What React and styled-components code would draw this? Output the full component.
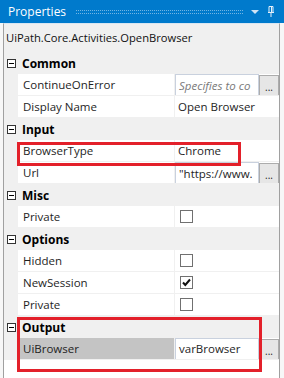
import React from 'react'
import styled, { createGlobalStyle } from 'styled-components'

const titleBlue = '#007acc'
const lineGray = '#a0a0a0'
const panelGray = '#f0f0f0'
const red = '#e3202a'

const GlobalStyle = createGlobalStyle`
  html, body {
    margin: 0;
    padding: 0;
    background: #fff;
  }
  body {
    font-family: "Open Sans", "Noto Sans", sans-serif;
    font-size: 11.5px;
    color: #1e1e1e;
  }
`

const Panel = styled.div`
  position: relative;
  width: 284px;
  height: 378px;
  overflow: hidden;
  background: #f7f7f7;
`

const TitleBar = styled.div`
  display: flex;
  align-items: center;
  height: 23px;
  padding: 0 0 0 8px;
  background: ${titleBlue};
  color: #fff;
  font-size: 12px;
`

const Grip = styled.div`
  flex: 1;
  height: 2px;
  margin: 1px 8px 0 10px;
  border-top: 1px dotted rgba(255, 255, 255, 0.45);
  border-bottom: 1px dotted rgba(255, 255, 255, 0.45);
`

const TitleIcons = styled.div`
  display: flex;
  align-items: center;
  gap: 8px;
  padding-right: 9px;
`

const Body = styled.div`
  margin: 0 4px 0 3px;
  height: 355px;
  border-left: 1px solid ${lineGray};
  border-right: 1px solid ${lineGray};
  border-top: 1px solid #d8e6f2;
  background: ${panelGray};
  display: flex;
  flex-direction: column;
`

const Subtitle = styled.div`
  height: 28px;
  line-height: 28px;
  padding-left: 2px;
  font-size: 11.2px;
  color: #111;
`

const Grid = styled.div`
  flex: 1;
  background: #fff;
  display: flex;
  flex-direction: column;
`

const Row = styled.div`
  display: grid;
  grid-template-columns: 14px 156px 1px 104px;
  height: 22px;
  box-sizing: border-box;
  background: ${panelGray};
  border-bottom: ${(p) => (p.$category ? 'none' : `1px solid ${panelGray}`)};
`

const Gutter = styled.div`
  display: flex;
  align-items: center;
  justify-content: center;
  padding-left: 1px;
`

const Minus = styled.div`
  position: relative;
  width: 7px;
  height: 7px;
  border: 1px solid #333;
  background: #fff;

  &::after {
    content: '';
    position: absolute;
    left: 1px;
    right: 1px;
    top: 3px;
    height: 1px;
    background: #000;
  }
`

const CategoryName = styled.div`
  grid-column: 2 / 5;
  display: flex;
  align-items: center;
  padding-left: 4px;
  font-weight: 700;
  font-size: 12px;
  color: #000;
`

const NameCell = styled.div`
  display: flex;
  align-items: center;
  padding-left: 5px;
  background: ${(p) => (p.$selected ? '#c4c4c4' : '#fff')};
  white-space: nowrap;
  overflow: hidden;
`

const Divider = styled.div`
  background: ${panelGray};
`

const ValueCell = styled.div`
  display: flex;
  align-items: center;
  background: #fff;
  padding-left: ${(p) => (p.$pad ? '3px' : '0')};
  white-space: nowrap;
  overflow: hidden;
`

const TextBox = styled.div`
  box-sizing: border-box;
  flex: 0 0 84px;
  min-width: 0;
  height: 22px;
  margin-top: ${(p) => (p.$shift ? '1px' : '0')};
  display: flex;
  align-items: center;
  padding-left: 3px;
  border: 1px solid #c9d1de;
  background: #fff;
  overflow: hidden;
  white-space: nowrap;
  color: ${(p) => (p.$placeholder ? '#7a7a7a' : '#1e1e1e')};
  font-style: ${(p) => (p.$placeholder ? 'italic' : 'normal')};
`

const DotsButton = styled.div`
  box-sizing: border-box;
  flex: 0 0 20px;
  height: 21px;
  margin-top: 1px;
  border: 1px solid #acacac;
  background: #e6e6e6;
  display: flex;
  align-items: flex-end;
  justify-content: center;
  padding-bottom: 4px;
  font-size: 10px;
  line-height: 8px;
  color: #222;
`

const Check = styled.div`
  box-sizing: border-box;
  width: 13px;
  height: 13px;
  margin-left: 2px;
  border: 1px solid #707070;
  background: #fff;
  display: flex;
  align-items: center;
  justify-content: center;
`

const Highlight = styled.div`
  position: absolute;
  left: ${(p) => p.$x}px;
  top: ${(p) => p.$y}px;
  width: ${(p) => p.$w}px;
  height: ${(p) => p.$h}px;
  box-sizing: border-box;
  border: 3px solid ${red};
  pointer-events: none;
`

const Category = ({ name }) => (
  <Row $category>
    <Gutter>
      <Minus />
    </Gutter>
    <CategoryName>{name}</CategoryName>
  </Row>
)

const Prop = ({ name, selected, children, pad }) => (
  <Row>
    <Gutter />
    <NameCell $selected={selected}>{name}</NameCell>
    <Divider />
    <ValueCell $pad={pad}>{children}</ValueCell>
  </Row>
)

const CheckBox = ({ checked }) => (
  <Check>
    {checked && (
      <svg width="11" height="11" viewBox="0 0 11 11">
        <path d="M2 5.5 L4.3 8 L9 2.5" fill="none" stroke="#111" strokeWidth="2" />
      </svg>
    )}
  </Check>
)

export default function App() {
  return (
    <>
      <GlobalStyle />
      <Panel>
        <TitleBar>
          Properties
          <Grip />
          <TitleIcons>
            <svg width="8" height="4" viewBox="0 0 8 4">
              <path d="M0 0 H8 L4 4 Z" fill="#cfe3f5" />
            </svg>
            <svg width="8" height="11" viewBox="0 0 8 11">
              <path d="M2 0.5 H6 V6.5 H2 Z M1 6.5 H7 M4 7 V11" fill="none" stroke="#e6f0fa" strokeWidth="1" />
              <path d="M4.5 1 V6" stroke="#e6f0fa" strokeWidth="1" />
            </svg>
          </TitleIcons>
        </TitleBar>
        <Body>
          <Subtitle>UiPath.Core.Activities.OpenBrowser</Subtitle>
          <Grid>
            <Category name="Common" />
            <Prop name="ContinueOnError">
              <TextBox $placeholder $shift>Specifies to co</TextBox>
              <DotsButton>...</DotsButton>
            </Prop>
            <Prop name="Display Name" pad>Open Browser</Prop>
            <Category name="Input" />
            <Prop name="BrowserType" pad>Chrome</Prop>
            <Prop name="Url">
              <TextBox $shift>"https://www.</TextBox>
              <DotsButton>...</DotsButton>
            </Prop>
            <Category name="Misc" />
            <Prop name="Private" pad><CheckBox /></Prop>
            <Category name="Options" />
            <Prop name="Hidden" pad><CheckBox /></Prop>
            <Prop name="NewSession" pad><CheckBox checked /></Prop>
            <Prop name="Private" pad><CheckBox /></Prop>
            <Category name="Output" />
            <Prop name="UiBrowser" selected>
              <TextBox>varBrowser</TextBox>
              <DotsButton>...</DotsButton>
            </Prop>
          </Grid>
        </Body>
        <Highlight $x={17} $y={142} $w={224} $h={24} />
        <Highlight $x={17} $y={317} $w={245} $h={55} />
      </Panel>
    </>
  )
}
